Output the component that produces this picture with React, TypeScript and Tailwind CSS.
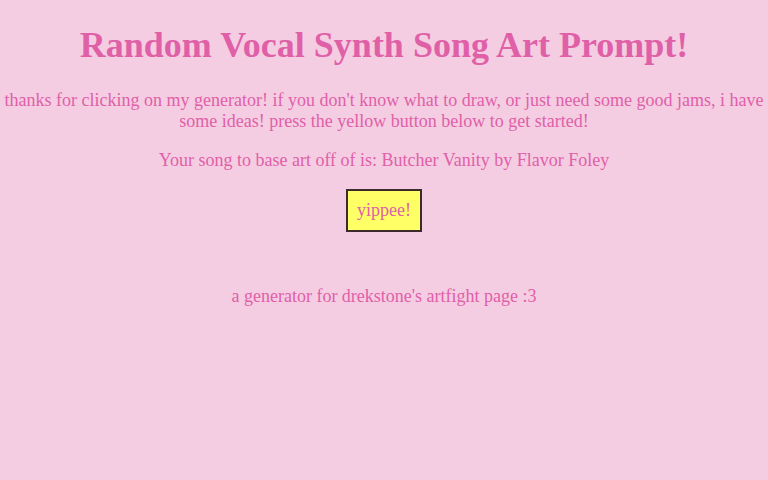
import React, { useState } from "react";

const songs = [
  "Butcher Vanity by Flavor Foley",
  "Rolling Girl by wowaka",
  "World is Mine by ryo",
  "Ghost Rule by DECO*27",
];

export default function App() {
  const [song, setSong] = useState(songs[0]);

  const pick = () => {
    setSong(songs[Math.floor(Math.random() * songs.length)]);
  };

  return (
    <div className="min-h-screen bg-[#f5cde2] text-center text-[#e060a8] font-['Liberation_Serif',serif] text-[18px] leading-[1.15]">
      <h1 className="pt-[24px] text-[36px] font-bold leading-[42px]">Random Vocal Synth Song Art Prompt!</h1>
      <p className="mt-[24px]">
        thanks for clicking on my generator! if you don't know what to draw, or just need some good jams, i have some ideas! press
        the yellow button below to get started!
      </p>
      <p className="mt-[19px]">Your song to base art off of is: {song}</p>
      <button
        onClick={pick}
        className="mt-[18px] border-2 border-[#3a2a2a] bg-[#ffff66] px-[9px] py-[9px] text-[18px] text-[#e060a8]"
      >
        yippee!
      </button>
      <p className="mt-[54px]">a generator for drekstone's artfight page :3</p>
    </div>
  );
}
